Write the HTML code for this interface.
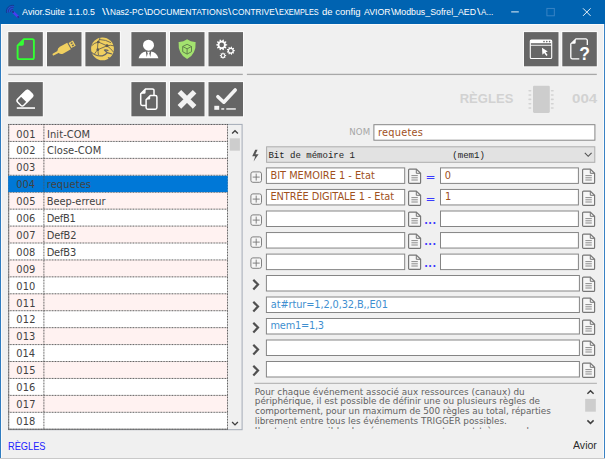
<!DOCTYPE html>
<html lang="fr">
<head>
<meta charset="utf-8">
<title>Avior.Suite 1.1.0.5</title>
<style>
html,body{margin:0;padding:0;}
body{width:605px;height:459px;overflow:hidden;background:#f0f0f0;position:relative;font-family:"DejaVu Sans","Liberation Sans",sans-serif;}
#win{position:absolute;left:0;top:0;width:605px;height:459px;overflow:hidden;background:#f0f0f0;}
.abs{position:absolute;}
#titlebar{position:absolute;left:0;top:0;width:605px;height:23.8px;background:#0063b1;}
#title{position:absolute;left:0;top:0;width:500px;height:24px;}
.btn{position:absolute;width:40px;height:40px;}
.btn svg{display:block;}
.hr{position:absolute;height:1.2px;background:#adadad;}
.t{position:absolute;white-space:pre;}
#list{position:absolute;left:6px;top:122px;width:240px;height:311px;}
.row{position:static;}
.gl{position:absolute;}
.inp{position:absolute;overflow:hidden;}
.brown{color:#9a4a14;}
.blue{color:#3f8fd0;}
</style>
</head>
<body>
<div id="win">
<div id="titlebar"></div>
<div class="abs" style="left:0;top:23.8px;width:605px;height:1.3px;background:#fbfbfb"></div>
<svg class="abs" style="left:4px;top:3px" width="18" height="18" viewBox="0 0 18 18"><path d="M5.41 9.23 A3.2 3.2 0 0 1 9.33 5.31" stroke="#3f46e6" stroke-width="4.6" fill="none" opacity="0.55"/><path d="M6.57 8.92 A2.0 2.0 0 0 1 9.02 6.47" stroke="#1d2a86" stroke-width="0.9" fill="none" opacity="0.8"/><path d="M4.54 9.46 A4.1 4.1 0 0 1 9.56 4.44" stroke="#1d2a86" stroke-width="0.9" fill="none" opacity="0.8"/><path d="M2.61 9.98 A6.1 6.1 0 0 1 10.08 2.51" stroke="#1d2a86" stroke-width="0.9" fill="none" opacity="0.8"/><path d="M8.7 8.6 L14.6 14.3" stroke="#4a3df0" stroke-width="2.5" stroke-linecap="butt"/><circle cx="9" cy="8.9" r="1.1" fill="#23308f"/><circle cx="14.2" cy="13.9" r="1" fill="#23308f"/></svg>
<div id="title"><div class="t ti" style="left:21.60px;top:6.30px;font-family:'Liberation Sans',sans-serif;font-size:9.6px;line-height:12px;color:#fff;transform:scaleX(0.9446);transform-origin:0 0;">Avior.Suite</div>
<div class="t ti" style="left:67.74px;top:6.30px;font-family:'Liberation Sans',sans-serif;font-size:9.6px;line-height:12px;color:#fff;transform:scaleX(0.9141);transform-origin:0 0;">1.1.0.5</div>
<div class="t ti" style="left:102.40px;top:6.30px;font-family:'Liberation Sans',sans-serif;font-size:9.6px;line-height:12px;color:#fff;transform:scaleX(1.3765);transform-origin:0 0;">\\</div>
<div class="t ti" style="left:109.54px;top:6.30px;font-family:'Liberation Sans',sans-serif;font-size:9.6px;line-height:12px;color:#fff;transform:scaleX(0.8566);transform-origin:0 0;">Nas2-PC</div>
<div class="t ti" style="left:143.75px;top:6.30px;font-family:'Liberation Sans',sans-serif;font-size:9.6px;line-height:12px;color:#fff;transform:scaleX(1.1905);transform-origin:0 0;">\</div>
<div class="t ti" style="left:147.21px;top:6.30px;font-family:'Liberation Sans',sans-serif;font-size:9.6px;line-height:12px;color:#fff;transform:scaleX(0.8995);transform-origin:0 0;">DOCUMENTATIONS</div>
<div class="t ti" style="left:228.35px;top:6.30px;font-family:'Liberation Sans',sans-serif;font-size:9.6px;line-height:12px;color:#fff;transform:scaleX(1.2277);transform-origin:0 0;">\</div>
<div class="t ti" style="left:232.09px;top:6.30px;font-family:'Liberation Sans',sans-serif;font-size:9.6px;line-height:12px;color:#fff;transform:scaleX(0.8641);transform-origin:0 0;">CONTRIVE</div>
<div class="t ti" style="left:275.35px;top:6.30px;font-family:'Liberation Sans',sans-serif;font-size:9.6px;line-height:12px;color:#fff;transform:scaleX(1.2649);transform-origin:0 0;">\</div>
<div class="t ti" style="left:278.91px;top:6.30px;font-family:'Liberation Sans',sans-serif;font-size:9.6px;line-height:12px;color:#fff;transform:scaleX(0.7689);transform-origin:0 0;">EXEMPLES</div>
<div class="t ti" style="left:322.22px;top:6.30px;font-family:'Liberation Sans',sans-serif;font-size:9.6px;line-height:12px;color:#fff;transform:scaleX(0.9891);transform-origin:0 0;">de config</div>
<div class="t ti" style="left:364.10px;top:6.30px;font-family:'Liberation Sans',sans-serif;font-size:9.6px;line-height:12px;color:#fff;transform:scaleX(0.9147);transform-origin:0 0;">AVIOR</div>
<div class="t ti" style="left:391.05px;top:6.30px;font-family:'Liberation Sans',sans-serif;font-size:9.6px;line-height:12px;color:#fff;transform:scaleX(1.1905);transform-origin:0 0;">\</div>
<div class="t ti" style="left:394.20px;top:6.30px;font-family:'Liberation Sans',sans-serif;font-size:9.6px;line-height:12px;color:#fff;transform:scaleX(0.9161);transform-origin:0 0;">Modbus_Sofrel_AED</div>
<div class="t ti" style="left:476.55px;top:6.30px;font-family:'Liberation Sans',sans-serif;font-size:9.6px;line-height:12px;color:#fff;transform:scaleX(1.3021);transform-origin:0 0;">\</div>
<div class="t ti" style="left:481.00px;top:6.30px;font-family:'Liberation Sans',sans-serif;font-size:9.6px;line-height:12px;color:#fff;transform:scaleX(0.8466);transform-origin:0 0;">A...</div>
</div>
<svg class="abs" style="left:505px;top:0" width="100" height="24" viewBox="0 0 100 24"><path d="M6.2 11.9 H13.8" stroke="#fff" stroke-width="0.9"/><rect x="41.9" y="8.4" width="7.4" height="7.4" fill="none" stroke="#3d86c6" stroke-width="0.9"/><path d="M78 8.3 L85.6 15.9 M85.6 8.3 L78 15.9" stroke="#fff" stroke-width="0.9"/></svg>
<div class="btn" style="left:6px;top:30px"><svg width="40" height="40" viewBox="0 0 40 40"><g transform="translate(2.30 2.10)"><rect x="-1" y="-1" width="36.5" height="36.2" fill="#fafafa"/><rect x="0" y="0" width="34.5" height="34.2" fill="#666"/><path d="M9.3 13.6 L15.6 7 H24 a1.6 1.6 0 0 1 1.6 1.6 V25.4 a1.6 1.6 0 0 1 -1.6 1.6 H10.9 a1.6 1.6 0 0 1 -1.6 -1.6 Z" fill="none" stroke="#33ff33" stroke-width="1.9" stroke-linejoin="round"/><path d="M9.6 13.6 L15.6 7.2 V11.8 a1.8 1.8 0 0 1 -1.8 1.8 Z" fill="#33ff33"/></g></svg></div>
<div class="btn" style="left:45px;top:30px"><svg width="40" height="40" viewBox="0 0 40 40"><g transform="translate(2.00 2.10)"><rect x="-1" y="-1" width="36.5" height="36.2" fill="#fafafa"/><rect x="0" y="0" width="34.5" height="34.2" fill="#666"/><g transform="translate(17.1 16.6) rotate(-28.5)" fill="#f0d060"><rect x="-13" y="-1.05" width="7.6" height="2.1" rx="1"/><path d="M-6.6 -1.6 Q-5.6 -3.7 -2.8 -3.8 H5.6 V3.8 H-2.8 Q-5.6 3.7 -6.6 1.6 Z"/><path d="M6.6 -2.9 H11.6 V2.9 H6.6 Z M8.3 -2 V-0.6 H10.3 V-2 Z M8.3 0.6 V2 H10.3 V0.6 Z" fill-rule="evenodd"/></g></g></svg></div>
<div class="btn" style="left:83px;top:30px"><svg width="40" height="40" viewBox="0 0 40 40"><g transform="translate(2.40 2.10)"><rect x="-1" y="-1" width="36.5" height="36.2" fill="#fafafa"/><rect x="0" y="0" width="34.5" height="34.2" fill="#666"/><g><circle cx="17.1" cy="16.8" r="11.4" fill="#f0d060"/><g stroke="#6a6454" stroke-width="0.9" fill="none" stroke-linecap="round"><path d="M12.9 9.9 L21.6 13.7 L12.4 17.6 Z"/><path d="M12.9 9.9 L14.6 5.9"/><path d="M12.9 9.9 Q9 10.6 6.4 13.4"/><path d="M21.6 13.7 Q25 12.6 28.3 13.6"/><path d="M21.6 13.7 Q25.4 16.2 27.8 19.6"/><path d="M12.4 17.6 Q10.6 19.6 9.3 21.6"/><path d="M12.4 17.6 L13 22.6"/><path d="M14.2 7.4 Q20.6 7.6 25.2 10.4"/></g><circle cx="12.9" cy="9.9" r="1.35" fill="#5f5a50"/><circle cx="21.6" cy="13.7" r="1.45" fill="#5f5a50"/><circle cx="12.4" cy="17.6" r="1.35" fill="#5f5a50"/><path d="M5.9 20 Q11 24.7 17 23.7 Q20.2 23 21.7 20.5 L26.6 21.9" fill="none" stroke="#666" stroke-width="1.2" stroke-linejoin="round"/><path d="M21.9 20.7 L19 17.9 Q21.4 17.6 23 18.6" fill="none" stroke="#666" stroke-width="1.2" stroke-linejoin="round"/><path d="M22.2 24.8 L24.2 28.4 L26.4 27.6 L24.3 25.3 Z" fill="#666"/></g></g></svg></div>
<div class="btn" style="left:129px;top:30px"><svg width="40" height="40" viewBox="0 0 40 40"><g transform="translate(2.40 2.10)"><rect x="-1" y="-1" width="36.5" height="36.2" fill="#fafafa"/><rect x="0" y="0" width="34.5" height="34.2" fill="#666"/><circle cx="17.1" cy="13.1" r="5.5" fill="#fff"/><path d="M7.2 26.1 Q8.6 20.4 14.4 19.3 L15.3 24.8 L16.4 21.2 L15.6 19.6 H18.6 L17.8 21.2 L18.9 24.8 L19.8 19.3 Q25.6 20.4 27 26.1 Z" fill="#fff"/></g></svg></div>
<div class="btn" style="left:168px;top:30px"><svg width="40" height="40" viewBox="0 0 40 40"><g transform="translate(2.00 2.10)"><rect x="-1" y="-1" width="36.5" height="36.2" fill="#fafafa"/><rect x="0" y="0" width="34.5" height="34.2" fill="#666"/><path d="M17.1 7.2 Q20.8 10 25.6 9.8 Q26.4 22 17.1 27 Q7.8 22 8.6 9.8 Q13.4 10 17.1 7.2 Z" fill="#a3e26f"/><g fill="none" stroke="#5b7a48" stroke-width="0.9" stroke-linejoin="round"><path d="M17.1 12.2 L21.5 14.4 V19.6 L17.1 22 L12.7 19.6 V14.4 Z"/><path d="M12.7 14.4 L17.1 16.7 L21.5 14.4 M17.1 16.7 V22"/></g></g></svg></div>
<div class="btn" style="left:206px;top:30px"><svg width="40" height="40" viewBox="0 0 40 40"><g transform="translate(2.50 2.10)"><rect x="-1" y="-1" width="36.5" height="36.2" fill="#fafafa"/><rect x="0" y="0" width="34.5" height="34.2" fill="#666"/><path d="M18.78 12.36 L18.78 13.24 L17.19 13.76 L16.99 14.37 L17.97 15.73 L17.46 16.44 L15.86 15.92 L15.34 16.30 L15.34 17.97 L14.51 18.25 L13.52 16.89 L12.88 16.89 L11.89 18.25 L11.06 17.97 L11.06 16.30 L10.54 15.92 L8.94 16.44 L8.43 15.73 L9.41 14.37 L9.21 13.76 L7.62 13.24 L7.62 12.36 L9.21 11.84 L9.41 11.23 L8.43 9.87 L8.94 9.16 L10.54 9.68 L11.06 9.30 L11.06 7.63 L11.89 7.35 L12.88 8.71 L13.52 8.71 L14.51 7.35 L15.34 7.63 L15.34 9.30 L15.86 9.68 L17.46 9.16 L17.97 9.87 L16.99 11.23 L17.19 11.84 Z M10.90 12.80 a2.3 2.3 0 1 0 4.6 0 a2.3 2.3 0 1 0 -4.6 0 Z" fill="#fff" fill-rule="evenodd"/><path d="M26.38 18.24 L26.38 18.96 L25.20 19.38 L25.02 19.87 L25.66 20.95 L25.20 21.50 L24.02 21.06 L23.57 21.32 L23.36 22.56 L22.66 22.68 L22.04 21.59 L21.52 21.50 L20.57 22.32 L19.95 21.96 L20.18 20.72 L19.84 20.32 L18.58 20.33 L18.34 19.66 L19.31 18.86 L19.31 18.34 L18.34 17.54 L18.58 16.87 L19.84 16.88 L20.18 16.48 L19.95 15.24 L20.57 14.88 L21.52 15.70 L22.04 15.61 L22.66 14.52 L23.36 14.64 L23.57 15.88 L24.02 16.14 L25.20 15.70 L25.66 16.25 L25.02 17.33 L25.20 17.82 Z M20.50 18.60 a1.8 1.8 0 1 0 3.6 0 a1.8 1.8 0 1 0 -3.6 0 Z" fill="#fff" fill-rule="evenodd"/><path d="M17.68 23.19 L17.68 23.81 L16.70 24.17 L16.53 24.58 L16.97 25.53 L16.53 25.97 L15.58 25.53 L15.17 25.70 L14.81 26.68 L14.19 26.68 L13.83 25.70 L13.42 25.53 L12.47 25.97 L12.03 25.53 L12.47 24.58 L12.30 24.17 L11.32 23.81 L11.32 23.19 L12.30 22.83 L12.47 22.42 L12.03 21.47 L12.47 21.03 L13.42 21.47 L13.83 21.30 L14.19 20.32 L14.81 20.32 L15.17 21.30 L15.58 21.47 L16.53 21.03 L16.97 21.47 L16.53 22.42 L16.70 22.83 Z M13.15 23.50 a1.35 1.35 0 1 0 2.7 0 a1.35 1.35 0 1 0 -2.7 0 Z" fill="#fff" fill-rule="evenodd"/></g></svg></div>
<div class="btn" style="left:522px;top:30px"><svg width="40" height="40" viewBox="0 0 40 40"><g transform="translate(2.00 2.10)"><rect x="-1" y="-1" width="36.5" height="36.2" fill="#fafafa"/><rect x="0" y="0" width="34.5" height="34.2" fill="#666"/><rect x="6.3" y="7.9" width="21.4" height="18.5" rx="1" fill="none" stroke="#fff" stroke-width="1.1"/><rect x="6.3" y="7.9" width="21.4" height="3.2" fill="#fff"/><rect x="6.3" y="12.7" width="21.4" height="0.9" fill="#fff"/><circle cx="20" cy="9.5" r="0.8" fill="#666"/><circle cx="22.8" cy="9.5" r="0.8" fill="#666"/><circle cx="25.6" cy="9.5" r="0.8" fill="#666"/><path d="M18 15.6 L18.4 22.6 L20.2 21 L22.4 23.8 L23.6 22.8 L21.6 20.2 L23.8 19.4 Z" fill="#fff"/></g></svg></div>
<div class="btn" style="left:560px;top:30px"><svg width="40" height="40" viewBox="0 0 40 40"><g transform="translate(2.30 2.10)"><rect x="-1" y="-1" width="36.5" height="36.2" fill="#fafafa"/><rect x="0" y="0" width="34.5" height="34.2" fill="#666"/><path d="M17 26.7 H10.1 a1.6 1.6 0 0 1 -1.6 -1.6 V11.8 L13.6 6.8 H23.4 a1.6 1.6 0 0 1 1.6 1.6 V13" fill="none" stroke="#fff" stroke-width="1.3" stroke-linejoin="round"/><path d="M9 11.6 L13.4 7.2 V10.4 a1.2 1.2 0 0 1 -1.2 1.2 Z" fill="#fff"/><text x="22.2" y="27.6" text-anchor="middle" font-family="Liberation Sans, sans-serif" font-weight="bold" font-size="17.5" fill="#fff">?</text></g></svg></div>
<div class="btn" style="left:6px;top:80px"><svg width="40" height="40" viewBox="0 0 40 40"><g transform="translate(2.30 2.10)"><rect x="-1" y="-1" width="36.5" height="36.2" fill="#fafafa"/><rect x="0" y="0" width="34.5" height="34.2" fill="#666"/><g transform="translate(17.05 15.5) rotate(-45)"><rect x="-8.65" y="-4.3" width="15.9" height="8.6" rx="2.2" fill="none" stroke="#fff" stroke-width="1.5"/><path d="M-1.9 -4.3 H5.05 a2.2 2.2 0 0 1 2.2 2.2 V2.1 a2.2 2.2 0 0 1 -2.2 2.2 H-1.9 Z" fill="#fff" stroke="#fff" stroke-width="1"/></g><rect x="8.5" y="25.1" width="18.2" height="1.7" fill="#f4f4f4"/></g></svg></div>
<div class="btn" style="left:129px;top:80px"><svg width="40" height="40" viewBox="0 0 40 40"><g transform="translate(2.40 2.10)"><rect x="-1" y="-1" width="36.5" height="36.2" fill="#fafafa"/><rect x="0" y="0" width="34.5" height="34.2" fill="#666"/><path d="M9.3 11.8 L14.3 6.8 H21.0 a1.6 1.6 0 0 1 1.6 1.6 V21.7 a1.6 1.6 0 0 1 -1.6 1.6 H10.9 a1.6 1.6 0 0 1 -1.6 -1.6 Z" fill="none" stroke="#fff" stroke-width="1.5" stroke-linejoin="round"/><path d="M9.8 11.6 L14.2 7.2 V10.4 a1.2 1.2 0 0 1 -1.2 1.2 Z" fill="#fff"/><path d="M14.7 17.6 L18.9 13.4 H23.9 a1.6 1.6 0 0 1 1.6 1.6 V25.5 a1.6 1.6 0 0 1 -1.6 1.6 H16.3 a1.6 1.6 0 0 1 -1.6 -1.6 Z" fill="#666" stroke="#fff" stroke-width="1.5" stroke-linejoin="round"/><path d="M15.2 17.4 L18.8 13.8 V16.4 a1 1 0 0 1 -1 1 Z" fill="#fff"/></g></svg></div>
<div class="btn" style="left:168px;top:80px"><svg width="40" height="40" viewBox="0 0 40 40"><g transform="translate(2.00 2.10)"><rect x="-1" y="-1" width="36.5" height="36.2" fill="#fafafa"/><rect x="0" y="0" width="34.5" height="34.2" fill="#666"/><path d="M9.4 9.6 L24.6 24.8 M24.6 9.6 L9.4 24.8" stroke="#f2f2f2" stroke-width="5.1" fill="none"/></g></svg></div>
<div class="btn" style="left:206px;top:80px"><svg width="40" height="40" viewBox="0 0 40 40"><g transform="translate(2.50 2.10)"><rect x="-1" y="-1" width="36.5" height="36.2" fill="#fafafa"/><rect x="0" y="0" width="34.5" height="34.2" fill="#666"/><path d="M9.4 14.6 L15.3 20.1 L26.7 7.9" stroke="#f4f4f4" stroke-width="3.6" fill="none" stroke-linecap="round" stroke-linejoin="round"/><rect x="5.8" y="23.7" width="4.9" height="4" fill="#f4f4f4"/><rect x="12.8" y="26" width="2.9" height="1.7" fill="#ddd"/><rect x="17.8" y="26" width="9.5" height="1.7" fill="#ddd"/></g></svg></div>
<svg class="abs" style="left:0;top:72px" width="605" height="5" viewBox="0 72 605 5"><rect x="8.3" y="73.75" width="234.5" height="1.3" fill="#a8a8a8"/><rect x="246.9" y="73.75" width="349.9" height="1.3" fill="#a8a8a8"/></svg>
<div class="t" style="left:459.65px;top:90.30px;font-family:'Liberation Sans',sans-serif;font-weight:bold;font-size:13.0px;line-height:17px;letter-spacing:0.074px;color:#d2d2d2;">RÈGLES</div>
<div class="t" style="left:572.47px;top:90.30px;font-family:'Liberation Sans',sans-serif;font-weight:bold;font-size:13.0px;line-height:17px;color:#d2d2d2;transform:scaleX(1.1609);transform-origin:0 0;">004</div>
<svg class="abs" style="left:526px;top:84px" width="30" height="31" viewBox="0 0 30 31"><rect x="7" y="1.8" width="16.8" height="27.1" rx="1.3" fill="#cdcdcd"/><rect x="2.3" y="5.95" width="3.1" height="1.6" rx="0.8" fill="#d3d3d3"/><rect x="24.8" y="5.95" width="3" height="1.6" rx="0.8" fill="#d3d3d3"/><rect x="2.3" y="10.27" width="3.1" height="1.6" rx="0.8" fill="#d3d3d3"/><rect x="24.8" y="10.27" width="3" height="1.6" rx="0.8" fill="#d3d3d3"/><rect x="2.3" y="14.59" width="3.1" height="1.6" rx="0.8" fill="#d3d3d3"/><rect x="24.8" y="14.59" width="3" height="1.6" rx="0.8" fill="#d3d3d3"/><rect x="2.3" y="18.91" width="3.1" height="1.6" rx="0.8" fill="#d3d3d3"/><rect x="24.8" y="18.91" width="3" height="1.6" rx="0.8" fill="#d3d3d3"/><rect x="2.3" y="23.23" width="3.1" height="1.6" rx="0.8" fill="#d3d3d3"/><rect x="24.8" y="23.23" width="3" height="1.6" rx="0.8" fill="#d3d3d3"/></svg>
<div id="list">
<svg class="abs" style="left:0;top:0" width="240" height="311" viewBox="6 122 240 311"><rect x="8.7" y="124.4" width="233.4" height="305.3" fill="#f0f0f0" stroke="#a3abb6" stroke-width="1"/><rect x="8.7" y="124.50" width="218.80" height="16.93" fill="#fff2f1"/><rect x="8.7" y="141.43" width="218.80" height="16.93" fill="#ffffff"/><rect x="8.7" y="158.36" width="218.80" height="16.93" fill="#fff2f1"/><rect x="8.7" y="175.29" width="218.80" height="16.93" fill="#ffffff"/><rect x="8.7" y="192.22" width="218.80" height="16.93" fill="#fff2f1"/><rect x="8.7" y="209.15" width="218.80" height="16.93" fill="#ffffff"/><rect x="8.7" y="226.08" width="218.80" height="16.93" fill="#fff2f1"/><rect x="8.7" y="243.01" width="218.80" height="16.93" fill="#ffffff"/><rect x="8.7" y="259.94" width="218.80" height="16.93" fill="#fff2f1"/><rect x="8.7" y="276.87" width="218.80" height="16.93" fill="#ffffff"/><rect x="8.7" y="293.80" width="218.80" height="16.93" fill="#fff2f1"/><rect x="8.7" y="310.73" width="218.80" height="16.93" fill="#ffffff"/><rect x="8.7" y="327.66" width="218.80" height="16.93" fill="#fff2f1"/><rect x="8.7" y="344.59" width="218.80" height="16.93" fill="#ffffff"/><rect x="8.7" y="361.52" width="218.80" height="16.93" fill="#fff2f1"/><rect x="8.7" y="378.45" width="218.80" height="16.93" fill="#ffffff"/><rect x="8.7" y="395.38" width="218.80" height="16.93" fill="#fff2f1"/><rect x="8.7" y="412.31" width="218.80" height="16.93" fill="#ffffff"/><path d="M8.299999999999999 124.50 H227.9 M8.299999999999999 141.43 H227.9 M8.299999999999999 158.36 H227.9 M8.299999999999999 175.29 H227.9 M8.299999999999999 192.22 H227.9 M8.299999999999999 209.15 H227.9 M8.299999999999999 226.08 H227.9 M8.299999999999999 243.01 H227.9 M8.299999999999999 259.94 H227.9 M8.299999999999999 276.87 H227.9 M8.299999999999999 293.80 H227.9 M8.299999999999999 310.73 H227.9 M8.299999999999999 327.66 H227.9 M8.299999999999999 344.59 H227.9 M8.299999999999999 361.52 H227.9 M8.299999999999999 378.45 H227.9 M8.299999999999999 395.38 H227.9 M8.299999999999999 412.31 H227.9 M8.299999999999999 429.24 H227.9 M8.7 124.1 V429.64 M43.9 124.1 V429.64 M227.5 124.1 V429.64" fill="none" stroke="#505050" stroke-width="1" stroke-dasharray="0.9 0.66"/><path d="M8.299999999999999 429.24 H227.9" stroke="#666" stroke-width="1" opacity="0.75"/><path d="M8.7 124.1 V429.64" stroke="#777" stroke-width="1" opacity="0.5"/><rect x="8.2" y="175.8" width="219.50" height="16.3" fill="#0078d7"/><path d="M43.9 175.8 V192.1" stroke="#505050" stroke-width="1" stroke-dasharray="0.9 0.66" opacity="0.8"/><path d="M232.1 133.6 L235 130.7 L237.9 133.6" stroke="#404040" stroke-width="1.35" fill="none"/><rect x="229.8" y="138.3" width="10.1" height="12.4" fill="#cdcdcd"/><path d="M232.1 422 L235 424.9 L237.9 422" stroke="#404040" stroke-width="1.35" fill="none"/></svg>
<div class="row"><div class="t n" style="left:10.36px;top:5.60px;font-family:'DejaVu Sans',sans-serif;font-size:9.9px;line-height:13px;letter-spacing:0.163px;color:#424242;">001</div><div class="t v" style="left:41.06px;top:5.60px;font-family:'DejaVu Sans',sans-serif;font-size:9.9px;line-height:13px;letter-spacing:0.073px;color:#424242;">Init-COM</div></div>
<div class="row"><div class="t n" style="left:10.36px;top:22.49px;font-family:'DejaVu Sans',sans-serif;font-size:9.9px;line-height:13px;letter-spacing:0.188px;color:#424242;">002</div><div class="t v" style="left:41.06px;top:22.49px;font-family:'DejaVu Sans',sans-serif;font-size:9.9px;line-height:13px;letter-spacing:0.060px;color:#424242;">Close-COM</div></div>
<div class="row"><div class="t n" style="left:10.36px;top:39.38px;font-family:'DejaVu Sans',sans-serif;font-size:9.9px;line-height:13px;letter-spacing:0.089px;color:#424242;">003</div></div>
<div class="row"><div class="t n" style="left:10.36px;top:56.27px;font-family:'DejaVu Sans',sans-serif;font-size:9.9px;line-height:13px;letter-spacing:-0.035px;color:#424242;">004</div><div class="t v" style="left:40.71px;top:56.27px;font-family:'DejaVu Sans',sans-serif;font-size:9.9px;line-height:13px;letter-spacing:0.090px;color:#424242;">requetes</div></div>
<div class="row"><div class="t n" style="left:10.36px;top:73.16px;font-family:'DejaVu Sans',sans-serif;font-size:9.9px;line-height:13px;letter-spacing:0.138px;color:#424242;">005</div><div class="t v" style="left:40.66px;top:73.16px;font-family:'DejaVu Sans',sans-serif;font-size:9.9px;line-height:13px;letter-spacing:-0.011px;color:#424242;">Beep-erreur</div></div>
<div class="row"><div class="t n" style="left:10.36px;top:90.05px;font-family:'DejaVu Sans',sans-serif;font-size:9.9px;line-height:13px;letter-spacing:0.014px;color:#424242;">006</div><div class="t v" style="left:40.66px;top:90.05px;font-family:'DejaVu Sans',sans-serif;font-size:9.9px;line-height:13px;letter-spacing:-0.291px;color:#424242;">DefB1</div></div>
<div class="row"><div class="t n" style="left:10.36px;top:106.94px;font-family:'DejaVu Sans',sans-serif;font-size:9.9px;line-height:13px;letter-spacing:0.113px;color:#424242;">007</div><div class="t v" style="left:40.66px;top:106.94px;font-family:'DejaVu Sans',sans-serif;font-size:9.9px;line-height:13px;letter-spacing:-0.103px;color:#424242;">DefB2</div></div>
<div class="row"><div class="t n" style="left:10.36px;top:123.83px;font-family:'DejaVu Sans',sans-serif;font-size:9.9px;line-height:13px;letter-spacing:0.039px;color:#424242;">008</div><div class="t v" style="left:40.66px;top:123.83px;font-family:'DejaVu Sans',sans-serif;font-size:9.9px;line-height:13px;letter-spacing:-0.153px;color:#424242;">DefB3</div></div>
<div class="row"><div class="t n" style="left:10.36px;top:140.72px;font-family:'DejaVu Sans',sans-serif;font-size:9.9px;line-height:13px;letter-spacing:0.039px;color:#424242;">009</div></div>
<div class="row"><div class="t n" style="left:10.36px;top:157.61px;font-family:'DejaVu Sans',sans-serif;font-size:9.9px;line-height:13px;letter-spacing:0.039px;color:#424242;">010</div></div>
<div class="row"><div class="t n" style="left:10.36px;top:174.50px;font-family:'DejaVu Sans',sans-serif;font-size:9.9px;line-height:13px;letter-spacing:0.163px;color:#424242;">011</div></div>
<div class="row"><div class="t n" style="left:10.36px;top:191.39px;font-family:'DejaVu Sans',sans-serif;font-size:9.9px;line-height:13px;letter-spacing:0.188px;color:#424242;">012</div></div>
<div class="row"><div class="t n" style="left:10.36px;top:208.28px;font-family:'DejaVu Sans',sans-serif;font-size:9.9px;line-height:13px;letter-spacing:0.089px;color:#424242;">013</div></div>
<div class="row"><div class="t n" style="left:10.36px;top:225.17px;font-family:'DejaVu Sans',sans-serif;font-size:9.9px;line-height:13px;letter-spacing:-0.035px;color:#424242;">014</div></div>
<div class="row"><div class="t n" style="left:10.36px;top:242.06px;font-family:'DejaVu Sans',sans-serif;font-size:9.9px;line-height:13px;letter-spacing:0.138px;color:#424242;">015</div></div>
<div class="row"><div class="t n" style="left:10.36px;top:258.95px;font-family:'DejaVu Sans',sans-serif;font-size:9.9px;line-height:13px;letter-spacing:0.014px;color:#424242;">016</div></div>
<div class="row"><div class="t n" style="left:10.36px;top:275.84px;font-family:'DejaVu Sans',sans-serif;font-size:9.9px;line-height:13px;letter-spacing:0.113px;color:#424242;">017</div></div>
<div class="row"><div class="t n" style="left:10.36px;top:292.73px;font-family:'DejaVu Sans',sans-serif;font-size:9.9px;line-height:13px;letter-spacing:0.039px;color:#424242;">018</div></div>
</div>
<div class="t" style="left:349.18px;top:126.90px;font-family:'DejaVu Sans',sans-serif;font-size:8.6px;line-height:11px;letter-spacing:0.247px;color:#a6a6a6;">NOM</div>
<div class="inp" style="left:372px;top:123px;width:225px;height:20px"><svg class="abs" style="left:0;top:0" width="225" height="20" viewBox="372 123 225 20"><rect x="373.90" y="124.70" width="221.00" height="15.50" fill="#fff" stroke="#858585" stroke-width="1"/></svg><div class="t" style="left:6.02px;top:2.60px;font-family:'DejaVu Sans',sans-serif;font-size:9.8px;line-height:13px;letter-spacing:0.222px;color:#a0501c;">requetes</div></div>
<div class="inp" style="left:265px;top:145px;width:333px;height:20px"><svg class="abs" style="left:0;top:0" width="333" height="20" viewBox="265 145 333 20"><rect x="266.60" y="146.80" width="328.20" height="15.50" fill="#e2e2e2" stroke="#adadad" stroke-width="1"/></svg><div class="t" style="left:3.42px;top:5.20px;font-family:'Liberation Mono',monospace;font-size:9.03px;line-height:12px;color:#222;">Bit de mémoire 1                  (mem1)</div></div>
<svg class="abs" style="left:583px;top:150px" width="11" height="9" viewBox="0 0 11 9"><path d="M1.8 2.9 L5.2 6.3 L8.6 2.9" stroke="#505050" stroke-width="1.1" fill="none"/></svg>
<svg class="abs" style="left:250px;top:147.7px" width="11" height="15" viewBox="0 0 11 15"><path d="M5.2 1.8 L2.2 8.2 H5.2 L3.6 13.4 L8.6 6.2 H5.4 L7.6 1.8 Z" fill="#555"/></svg>
<svg class="abs" style="left:249.6px;top:171.00px" width="13" height="13" viewBox="0 0 13 13"><rect x="0.9" y="0.9" width="10.6" height="10.4" rx="2" fill="#f6f6f6" stroke="#808080" stroke-width="1"/><path d="M6.2 2.6 V9.6 M2.7 6.1 H9.7" stroke="#777" stroke-width="0.9"/></svg>
<div class="inp" style="left:264px;top:166px;width:143px;height:20px"><svg class="abs" style="left:0;top:0" width="143" height="20" viewBox="264 166 143 20"><rect x="266.40" y="167.90" width="138.30" height="15.50" fill="#fff" stroke="#858585" stroke-width="1"/></svg><div class="t" style="left:6.47px;top:2.80px;font-family:'DejaVu Sans',sans-serif;font-size:9.8px;line-height:13px;letter-spacing:-0.005px;color:#a0501c;">BIT MEMOIRE 1 - Etat</div></div>
<svg class="abs" style="left:407.9px;top:168.10px" width="14" height="17" viewBox="0 0 14 17"><path d="M1.6 1.1 H8.3 L12.6 5.3 V14.4 a1 1 0 0 1 -1 1 H1.6 a1 1 0 0 1 -1 -1 V2.1 a1 1 0 0 1 1 -1 Z" fill="#f6f6f6" stroke="#767676" stroke-width="1.15"/><path d="M8.3 1.1 V5.3 H12.6" fill="none" stroke="#767676" stroke-width="1"/><path d="M3.4 7.6 H9.8 M3.4 9.8 H9.8 M3.4 12 H9.8" stroke="#868686" stroke-width="0.95"/></svg>
<div class="t" style="left:425.44px;top:169.02px;font-family:'DejaVu Sans',sans-serif;font-size:12.0px;line-height:16px;color:#3a3aff;">=</div>
<div class="inp" style="left:439px;top:166px;width:142px;height:20px"><svg class="abs" style="left:0;top:0" width="142" height="20" viewBox="439 166 142 20"><rect x="440.50" y="167.90" width="137.90" height="15.50" fill="#fff" stroke="#858585" stroke-width="1"/></svg><div class="t" style="left:5.76px;top:2.80px;font-family:'DejaVu Sans',sans-serif;font-size:9.8px;line-height:13px;color:#a0501c;">0</div></div>
<svg class="abs" style="left:581.8px;top:168.10px" width="14" height="17" viewBox="0 0 14 17"><path d="M1.6 1.1 H8.3 L12.6 5.3 V14.4 a1 1 0 0 1 -1 1 H1.6 a1 1 0 0 1 -1 -1 V2.1 a1 1 0 0 1 1 -1 Z" fill="#f6f6f6" stroke="#767676" stroke-width="1.15"/><path d="M8.3 1.1 V5.3 H12.6" fill="none" stroke="#767676" stroke-width="1"/><path d="M3.4 7.6 H9.8 M3.4 9.8 H9.8 M3.4 12 H9.8" stroke="#868686" stroke-width="0.95"/></svg>
<svg class="abs" style="left:249.6px;top:192.55px" width="13" height="13" viewBox="0 0 13 13"><rect x="0.9" y="0.9" width="10.6" height="10.4" rx="2" fill="#f6f6f6" stroke="#808080" stroke-width="1"/><path d="M6.2 2.6 V9.6 M2.7 6.1 H9.7" stroke="#777" stroke-width="0.9"/></svg>
<div class="inp" style="left:264px;top:187px;width:143px;height:20px"><svg class="abs" style="left:0;top:0" width="143" height="20" viewBox="264 187 143 20"><rect x="266.40" y="189.45" width="138.30" height="15.50" fill="#fff" stroke="#858585" stroke-width="1"/></svg><div class="t" style="left:6.47px;top:3.35px;font-family:'DejaVu Sans',sans-serif;font-size:9.8px;line-height:13px;letter-spacing:-0.077px;color:#a0501c;">ENTRÉE DIGITALE 1 - Etat</div></div>
<svg class="abs" style="left:407.9px;top:189.65px" width="14" height="17" viewBox="0 0 14 17"><path d="M1.6 1.1 H8.3 L12.6 5.3 V14.4 a1 1 0 0 1 -1 1 H1.6 a1 1 0 0 1 -1 -1 V2.1 a1 1 0 0 1 1 -1 Z" fill="#f6f6f6" stroke="#767676" stroke-width="1.15"/><path d="M8.3 1.1 V5.3 H12.6" fill="none" stroke="#767676" stroke-width="1"/><path d="M3.4 7.6 H9.8 M3.4 9.8 H9.8 M3.4 12 H9.8" stroke="#868686" stroke-width="0.95"/></svg>
<div class="t" style="left:425.44px;top:190.57px;font-family:'DejaVu Sans',sans-serif;font-size:12.0px;line-height:16px;color:#3a3aff;">=</div>
<div class="inp" style="left:439px;top:187px;width:142px;height:20px"><svg class="abs" style="left:0;top:0" width="142" height="20" viewBox="439 187 142 20"><rect x="440.50" y="189.45" width="137.90" height="15.50" fill="#fff" stroke="#858585" stroke-width="1"/></svg><div class="t" style="left:5.97px;top:3.35px;font-family:'DejaVu Sans',sans-serif;font-size:9.8px;line-height:13px;color:#a0501c;">1</div></div>
<svg class="abs" style="left:581.8px;top:189.65px" width="14" height="17" viewBox="0 0 14 17"><path d="M1.6 1.1 H8.3 L12.6 5.3 V14.4 a1 1 0 0 1 -1 1 H1.6 a1 1 0 0 1 -1 -1 V2.1 a1 1 0 0 1 1 -1 Z" fill="#f6f6f6" stroke="#767676" stroke-width="1.15"/><path d="M8.3 1.1 V5.3 H12.6" fill="none" stroke="#767676" stroke-width="1"/><path d="M3.4 7.6 H9.8 M3.4 9.8 H9.8 M3.4 12 H9.8" stroke="#868686" stroke-width="0.95"/></svg>
<svg class="abs" style="left:249.6px;top:214.10px" width="13" height="13" viewBox="0 0 13 13"><rect x="0.9" y="0.9" width="10.6" height="10.4" rx="2" fill="#f6f6f6" stroke="#808080" stroke-width="1"/><path d="M6.2 2.6 V9.6 M2.7 6.1 H9.7" stroke="#777" stroke-width="0.9"/></svg>
<div class="inp" style="left:264px;top:209px;width:143px;height:20px"><svg class="abs" style="left:0;top:0" width="143" height="20" viewBox="264 209 143 20"><rect x="266.40" y="211.00" width="138.30" height="15.50" fill="#fff" stroke="#858585" stroke-width="1"/></svg></div>
<svg class="abs" style="left:407.9px;top:211.20px" width="14" height="17" viewBox="0 0 14 17"><path d="M1.6 1.1 H8.3 L12.6 5.3 V14.4 a1 1 0 0 1 -1 1 H1.6 a1 1 0 0 1 -1 -1 V2.1 a1 1 0 0 1 1 -1 Z" fill="#f6f6f6" stroke="#767676" stroke-width="1.15"/><path d="M8.3 1.1 V5.3 H12.6" fill="none" stroke="#767676" stroke-width="1"/><path d="M3.4 7.6 H9.8 M3.4 9.8 H9.8 M3.4 12 H9.8" stroke="#868686" stroke-width="0.95"/></svg>
<div class="t" style="left:424.14px;top:214.61px;font-family:'DejaVu Sans',sans-serif;font-weight:bold;font-size:9.6px;line-height:12px;letter-spacing:0.588px;color:#3a3aff;">...</div>
<div class="inp" style="left:439px;top:209px;width:142px;height:20px"><svg class="abs" style="left:0;top:0" width="142" height="20" viewBox="439 209 142 20"><rect x="440.50" y="211.00" width="137.90" height="15.50" fill="#fff" stroke="#858585" stroke-width="1"/></svg></div>
<svg class="abs" style="left:581.8px;top:211.20px" width="14" height="17" viewBox="0 0 14 17"><path d="M1.6 1.1 H8.3 L12.6 5.3 V14.4 a1 1 0 0 1 -1 1 H1.6 a1 1 0 0 1 -1 -1 V2.1 a1 1 0 0 1 1 -1 Z" fill="#f6f6f6" stroke="#767676" stroke-width="1.15"/><path d="M8.3 1.1 V5.3 H12.6" fill="none" stroke="#767676" stroke-width="1"/><path d="M3.4 7.6 H9.8 M3.4 9.8 H9.8 M3.4 12 H9.8" stroke="#868686" stroke-width="0.95"/></svg>
<svg class="abs" style="left:249.6px;top:235.65px" width="13" height="13" viewBox="0 0 13 13"><rect x="0.9" y="0.9" width="10.6" height="10.4" rx="2" fill="#f6f6f6" stroke="#808080" stroke-width="1"/><path d="M6.2 2.6 V9.6 M2.7 6.1 H9.7" stroke="#777" stroke-width="0.9"/></svg>
<div class="inp" style="left:264px;top:231px;width:143px;height:20px"><svg class="abs" style="left:0;top:0" width="143" height="20" viewBox="264 231 143 20"><rect x="266.40" y="232.55" width="138.30" height="15.50" fill="#fff" stroke="#858585" stroke-width="1"/></svg></div>
<svg class="abs" style="left:407.9px;top:232.75px" width="14" height="17" viewBox="0 0 14 17"><path d="M1.6 1.1 H8.3 L12.6 5.3 V14.4 a1 1 0 0 1 -1 1 H1.6 a1 1 0 0 1 -1 -1 V2.1 a1 1 0 0 1 1 -1 Z" fill="#f6f6f6" stroke="#767676" stroke-width="1.15"/><path d="M8.3 1.1 V5.3 H12.6" fill="none" stroke="#767676" stroke-width="1"/><path d="M3.4 7.6 H9.8 M3.4 9.8 H9.8 M3.4 12 H9.8" stroke="#868686" stroke-width="0.95"/></svg>
<div class="t" style="left:424.14px;top:236.16px;font-family:'DejaVu Sans',sans-serif;font-weight:bold;font-size:9.6px;line-height:12px;letter-spacing:0.588px;color:#3a3aff;">...</div>
<div class="inp" style="left:439px;top:231px;width:142px;height:20px"><svg class="abs" style="left:0;top:0" width="142" height="20" viewBox="439 231 142 20"><rect x="440.50" y="232.55" width="137.90" height="15.50" fill="#fff" stroke="#858585" stroke-width="1"/></svg></div>
<svg class="abs" style="left:581.8px;top:232.75px" width="14" height="17" viewBox="0 0 14 17"><path d="M1.6 1.1 H8.3 L12.6 5.3 V14.4 a1 1 0 0 1 -1 1 H1.6 a1 1 0 0 1 -1 -1 V2.1 a1 1 0 0 1 1 -1 Z" fill="#f6f6f6" stroke="#767676" stroke-width="1.15"/><path d="M8.3 1.1 V5.3 H12.6" fill="none" stroke="#767676" stroke-width="1"/><path d="M3.4 7.6 H9.8 M3.4 9.8 H9.8 M3.4 12 H9.8" stroke="#868686" stroke-width="0.95"/></svg>
<svg class="abs" style="left:249.6px;top:257.20px" width="13" height="13" viewBox="0 0 13 13"><rect x="0.9" y="0.9" width="10.6" height="10.4" rx="2" fill="#f6f6f6" stroke="#808080" stroke-width="1"/><path d="M6.2 2.6 V9.6 M2.7 6.1 H9.7" stroke="#777" stroke-width="0.9"/></svg>
<div class="inp" style="left:264px;top:252px;width:143px;height:20px"><svg class="abs" style="left:0;top:0" width="143" height="20" viewBox="264 252 143 20"><rect x="266.40" y="254.10" width="138.30" height="15.50" fill="#fff" stroke="#858585" stroke-width="1"/></svg></div>
<svg class="abs" style="left:407.9px;top:254.30px" width="14" height="17" viewBox="0 0 14 17"><path d="M1.6 1.1 H8.3 L12.6 5.3 V14.4 a1 1 0 0 1 -1 1 H1.6 a1 1 0 0 1 -1 -1 V2.1 a1 1 0 0 1 1 -1 Z" fill="#f6f6f6" stroke="#767676" stroke-width="1.15"/><path d="M8.3 1.1 V5.3 H12.6" fill="none" stroke="#767676" stroke-width="1"/><path d="M3.4 7.6 H9.8 M3.4 9.8 H9.8 M3.4 12 H9.8" stroke="#868686" stroke-width="0.95"/></svg>
<div class="t" style="left:424.14px;top:257.71px;font-family:'DejaVu Sans',sans-serif;font-weight:bold;font-size:9.6px;line-height:12px;letter-spacing:0.588px;color:#3a3aff;">...</div>
<div class="inp" style="left:439px;top:252px;width:142px;height:20px"><svg class="abs" style="left:0;top:0" width="142" height="20" viewBox="439 252 142 20"><rect x="440.50" y="254.10" width="137.90" height="15.50" fill="#fff" stroke="#858585" stroke-width="1"/></svg></div>
<svg class="abs" style="left:581.8px;top:254.30px" width="14" height="17" viewBox="0 0 14 17"><path d="M1.6 1.1 H8.3 L12.6 5.3 V14.4 a1 1 0 0 1 -1 1 H1.6 a1 1 0 0 1 -1 -1 V2.1 a1 1 0 0 1 1 -1 Z" fill="#f6f6f6" stroke="#767676" stroke-width="1.15"/><path d="M8.3 1.1 V5.3 H12.6" fill="none" stroke="#767676" stroke-width="1"/><path d="M3.4 7.6 H9.8 M3.4 9.8 H9.8 M3.4 12 H9.8" stroke="#868686" stroke-width="0.95"/></svg>
<svg class="abs" style="left:250.6px;top:278.10px" width="11" height="13" viewBox="0 0 11 13"><path d="M2.3 1.8 L7 6.6 L2.3 11.4" stroke="#505050" stroke-width="2.2" fill="none"/></svg>
<div class="inp" style="left:264px;top:274px;width:317px;height:20px"><svg class="abs" style="left:0;top:0" width="317" height="20" viewBox="264 274 317 20"><rect x="266.40" y="275.50" width="313.00" height="15.50" fill="#fff" stroke="#858585" stroke-width="1"/></svg></div>
<svg class="abs" style="left:581.8px;top:275.70px" width="14" height="17" viewBox="0 0 14 17"><path d="M1.6 1.1 H8.3 L12.6 5.3 V14.4 a1 1 0 0 1 -1 1 H1.6 a1 1 0 0 1 -1 -1 V2.1 a1 1 0 0 1 1 -1 Z" fill="#f6f6f6" stroke="#767676" stroke-width="1.15"/><path d="M8.3 1.1 V5.3 H12.6" fill="none" stroke="#767676" stroke-width="1"/><path d="M3.4 7.6 H9.8 M3.4 9.8 H9.8 M3.4 12 H9.8" stroke="#868686" stroke-width="0.95"/></svg>
<svg class="abs" style="left:250.6px;top:299.60px" width="11" height="13" viewBox="0 0 11 13"><path d="M2.3 1.8 L7 6.6 L2.3 11.4" stroke="#505050" stroke-width="2.2" fill="none"/></svg>
<div class="inp" style="left:264px;top:295px;width:317px;height:20px"><svg class="abs" style="left:0;top:0" width="317" height="20" viewBox="264 295 317 20"><rect x="266.40" y="297.00" width="313.00" height="15.50" fill="#fff" stroke="#858585" stroke-width="1"/></svg><div class="t" style="left:6.81px;top:2.90px;font-family:'DejaVu Sans',sans-serif;font-size:9.8px;line-height:13px;letter-spacing:-0.111px;color:#3f8fd0;">at#rtur=1,2,0,32,B,,E01</div></div>
<svg class="abs" style="left:581.8px;top:297.20px" width="14" height="17" viewBox="0 0 14 17"><path d="M1.6 1.1 H8.3 L12.6 5.3 V14.4 a1 1 0 0 1 -1 1 H1.6 a1 1 0 0 1 -1 -1 V2.1 a1 1 0 0 1 1 -1 Z" fill="#f6f6f6" stroke="#767676" stroke-width="1.15"/><path d="M8.3 1.1 V5.3 H12.6" fill="none" stroke="#767676" stroke-width="1"/><path d="M3.4 7.6 H9.8 M3.4 9.8 H9.8 M3.4 12 H9.8" stroke="#868686" stroke-width="0.95"/></svg>
<svg class="abs" style="left:250.6px;top:321.10px" width="11" height="13" viewBox="0 0 11 13"><path d="M2.3 1.8 L7 6.6 L2.3 11.4" stroke="#505050" stroke-width="2.2" fill="none"/></svg>
<div class="inp" style="left:264px;top:317px;width:317px;height:20px"><svg class="abs" style="left:0;top:0" width="317" height="20" viewBox="264 317 317 20"><rect x="266.40" y="318.50" width="313.00" height="15.50" fill="#fff" stroke="#858585" stroke-width="1"/></svg><div class="t" style="left:6.52px;top:2.40px;font-family:'DejaVu Sans',sans-serif;font-size:9.8px;line-height:13px;letter-spacing:-0.230px;color:#3f8fd0;">mem1=1,3</div></div>
<svg class="abs" style="left:581.8px;top:318.70px" width="14" height="17" viewBox="0 0 14 17"><path d="M1.6 1.1 H8.3 L12.6 5.3 V14.4 a1 1 0 0 1 -1 1 H1.6 a1 1 0 0 1 -1 -1 V2.1 a1 1 0 0 1 1 -1 Z" fill="#f6f6f6" stroke="#767676" stroke-width="1.15"/><path d="M8.3 1.1 V5.3 H12.6" fill="none" stroke="#767676" stroke-width="1"/><path d="M3.4 7.6 H9.8 M3.4 9.8 H9.8 M3.4 12 H9.8" stroke="#868686" stroke-width="0.95"/></svg>
<svg class="abs" style="left:250.6px;top:342.60px" width="11" height="13" viewBox="0 0 11 13"><path d="M2.3 1.8 L7 6.6 L2.3 11.4" stroke="#505050" stroke-width="2.2" fill="none"/></svg>
<div class="inp" style="left:264px;top:338px;width:317px;height:20px"><svg class="abs" style="left:0;top:0" width="317" height="20" viewBox="264 338 317 20"><rect x="266.40" y="340.00" width="313.00" height="15.50" fill="#fff" stroke="#858585" stroke-width="1"/></svg></div>
<svg class="abs" style="left:581.8px;top:340.20px" width="14" height="17" viewBox="0 0 14 17"><path d="M1.6 1.1 H8.3 L12.6 5.3 V14.4 a1 1 0 0 1 -1 1 H1.6 a1 1 0 0 1 -1 -1 V2.1 a1 1 0 0 1 1 -1 Z" fill="#f6f6f6" stroke="#767676" stroke-width="1.15"/><path d="M8.3 1.1 V5.3 H12.6" fill="none" stroke="#767676" stroke-width="1"/><path d="M3.4 7.6 H9.8 M3.4 9.8 H9.8 M3.4 12 H9.8" stroke="#868686" stroke-width="0.95"/></svg>
<svg class="abs" style="left:250.6px;top:364.10px" width="11" height="13" viewBox="0 0 11 13"><path d="M2.3 1.8 L7 6.6 L2.3 11.4" stroke="#505050" stroke-width="2.2" fill="none"/></svg>
<div class="inp" style="left:264px;top:360px;width:317px;height:20px"><svg class="abs" style="left:0;top:0" width="317" height="20" viewBox="264 360 317 20"><rect x="266.40" y="361.50" width="313.00" height="15.50" fill="#fff" stroke="#858585" stroke-width="1"/></svg></div>
<svg class="abs" style="left:581.8px;top:361.70px" width="14" height="17" viewBox="0 0 14 17"><path d="M1.6 1.1 H8.3 L12.6 5.3 V14.4 a1 1 0 0 1 -1 1 H1.6 a1 1 0 0 1 -1 -1 V2.1 a1 1 0 0 1 1 -1 Z" fill="#f6f6f6" stroke="#767676" stroke-width="1.15"/><path d="M8.3 1.1 V5.3 H12.6" fill="none" stroke="#767676" stroke-width="1"/><path d="M3.4 7.6 H9.8 M3.4 9.8 H9.8 M3.4 12 H9.8" stroke="#868686" stroke-width="0.95"/></svg>
<svg class="abs" style="left:0;top:381px" width="605" height="5" viewBox="0 381 605 5"><rect x="254.3" y="382.75" width="342.6" height="1.2" fill="#b6b6b6"/></svg>
<div class="abs" style="left:254px;top:385px;width:330px;height:43.9px;overflow:hidden"><div class="t" style="left:0.76px;top:0.50px;font-family:'DejaVu Sans',sans-serif;font-size:8.85px;line-height:12px;letter-spacing:0.018px;color:#626262;">Pour chaque événement associé aux ressources (canaux) du</div><div class="t" style="left:0.80px;top:10.40px;font-family:'DejaVu Sans',sans-serif;font-size:8.85px;line-height:12px;letter-spacing:-0.032px;color:#626262;">périphérique, il est possible de définir une ou plusieurs règles de</div><div class="t" style="left:1.11px;top:20.30px;font-family:'DejaVu Sans',sans-serif;font-size:8.85px;line-height:12px;letter-spacing:-0.042px;color:#626262;">comportement, pour un maximum de 500 règles au total, réparties</div><div class="t" style="left:0.80px;top:30.30px;font-family:'DejaVu Sans',sans-serif;font-size:8.85px;line-height:12px;letter-spacing:-0.008px;color:#626262;">librement entre tous les événements TRIGGER possibles.</div><div class="t" style="left:0.76px;top:40.20px;font-family:'DejaVu Sans',sans-serif;font-size:8.85px;line-height:12px;letter-spacing:0.325px;color:#626262;">Il est ainsi possible de gérer un comportement très complexe.</div></div>
<svg class="abs" style="left:584px;top:386px" width="13" height="44" viewBox="0 0 13 44"><path d="M3.4 7.8 L6.5 4.8 L9.6 7.8" stroke="#404040" stroke-width="1.5" fill="none"/><rect x="1.2" y="12.9" width="10.6" height="12.8" fill="#cdcdcd"/><path d="M3.4 34.4 L6.5 37.4 L9.6 34.4" stroke="#404040" stroke-width="1.5" fill="none"/></svg>
<div class="t" style="left:7.86px;top:439.60px;font-family:'Liberation Sans',sans-serif;font-size:10.2px;line-height:13px;color:#2222ff;transform:scaleX(0.9069);transform-origin:0 0;">RÈGLES</div>
<div class="t" style="left:572.80px;top:439.40px;font-family:'Liberation Sans',sans-serif;font-size:10.0px;line-height:13px;color:#2b2b2b;transform:scaleX(1.0557);transform-origin:0 0;">Avior</div>
<div class="abs" style="left:0;top:23.8px;width:0.9px;height:436px;background:#2f7cc0"></div>
<div class="abs" style="left:0.9px;top:24px;width:1.2px;height:434px;background:#fafafa"></div>
<div class="abs" style="left:603.8px;top:23.8px;width:1.2px;height:436px;background:#3a82c4"></div>
<div class="abs" style="left:602.8px;top:24px;width:1px;height:434px;background:#fafafa"></div>
<div class="abs" style="left:0;top:457.7px;width:605px;height:1.3px;background:#c9c9c9"></div>
</div>
</body>
</html>
